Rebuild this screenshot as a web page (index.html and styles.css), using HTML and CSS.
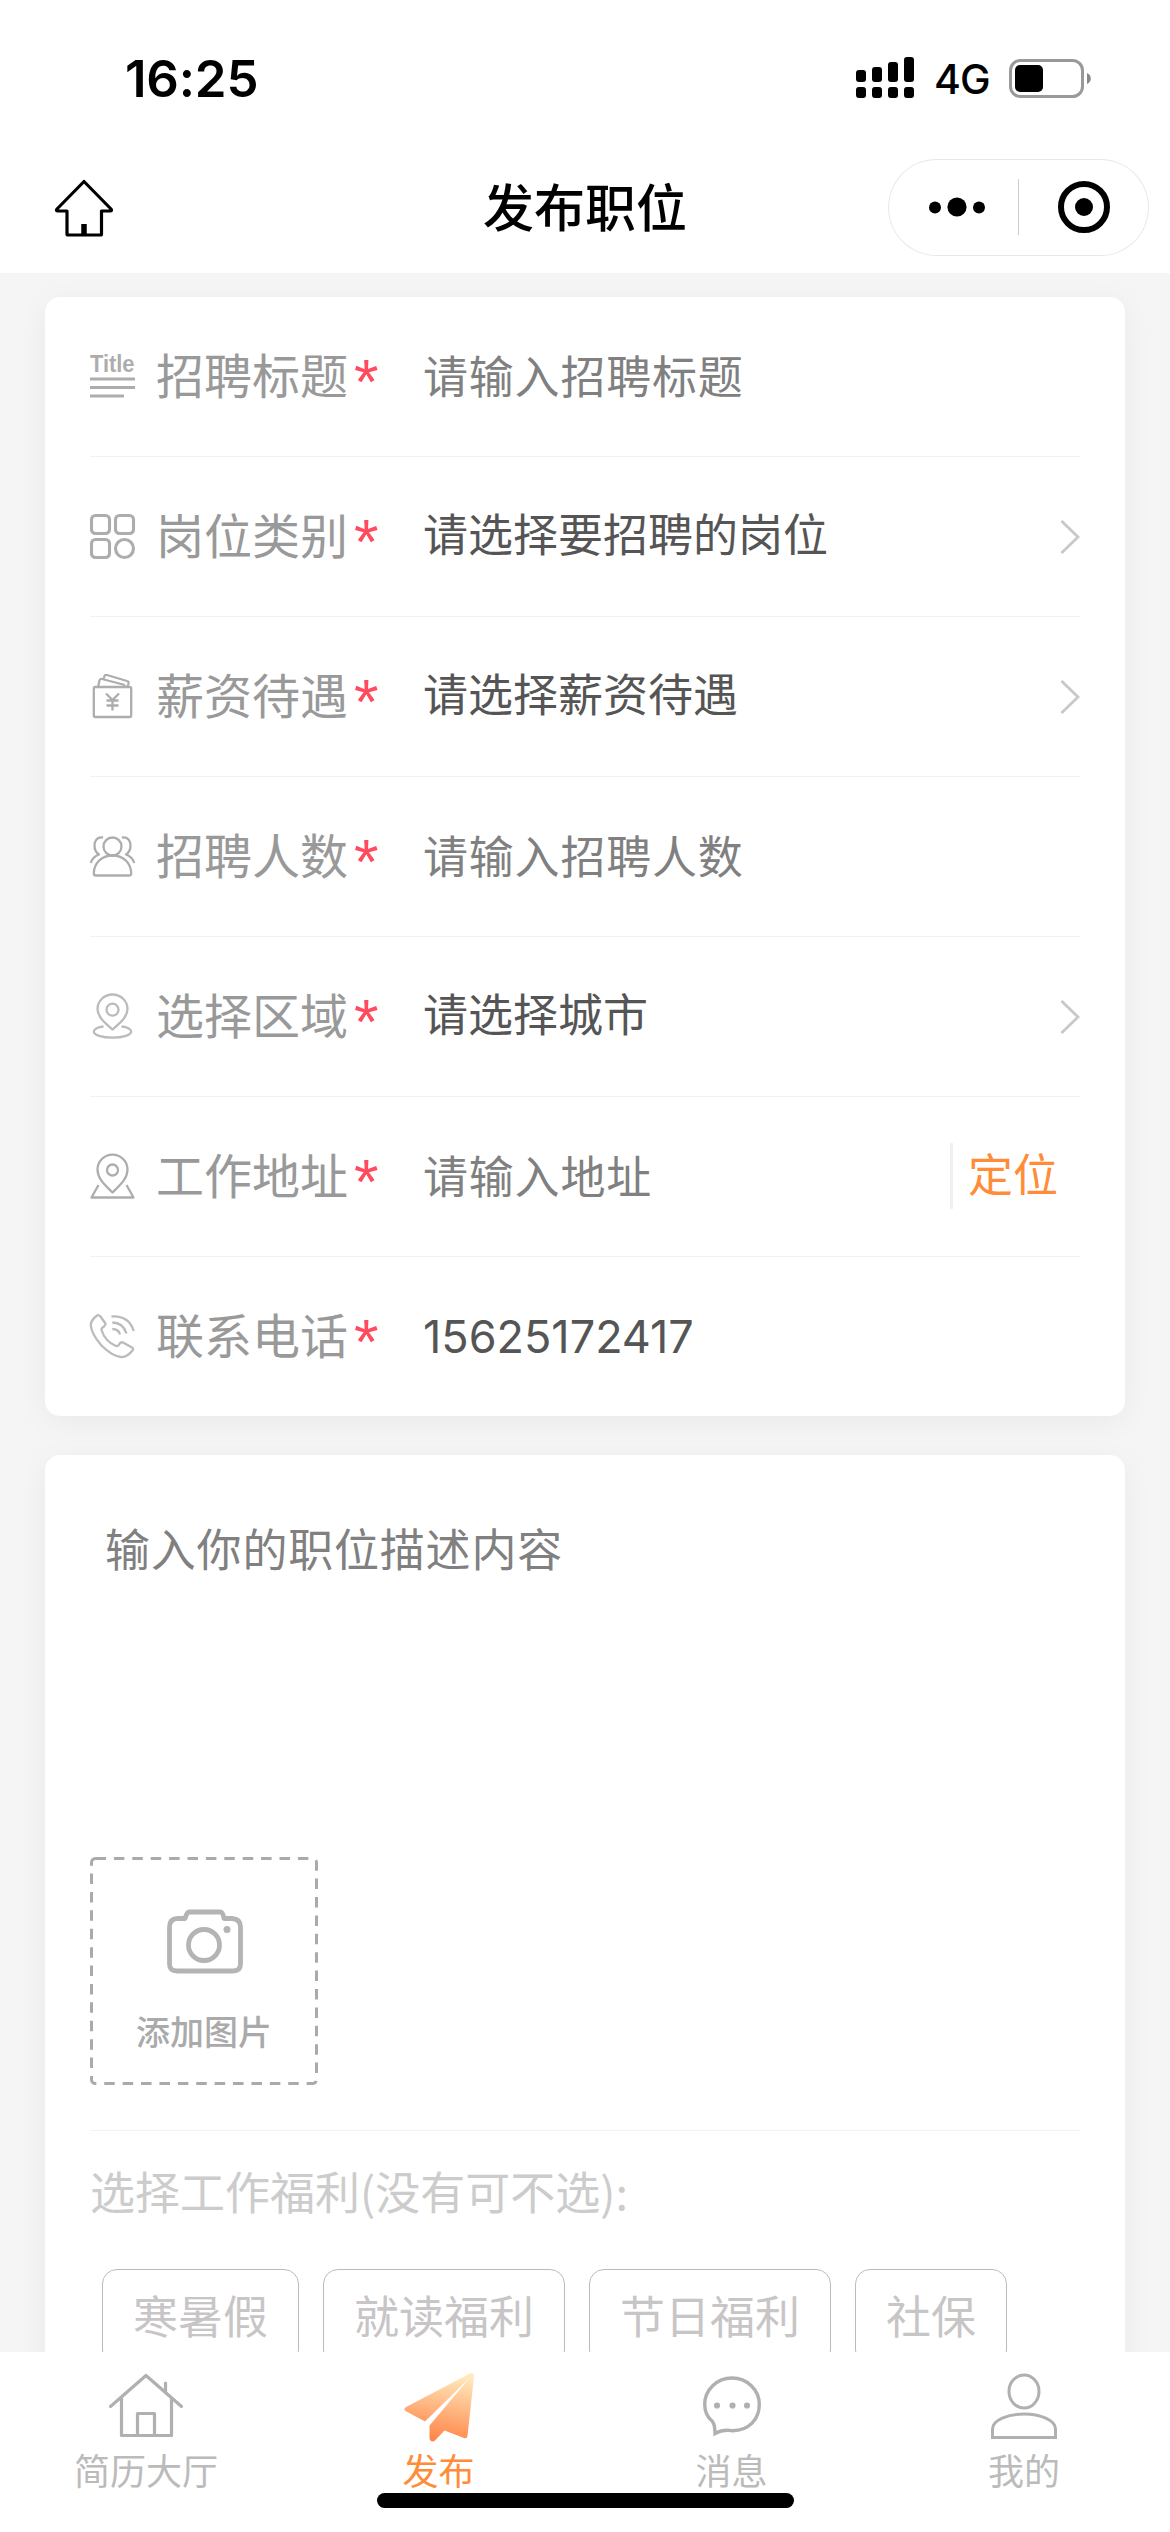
FILE: index.html
```html
<!DOCTYPE html>
<html lang="zh-CN">
<head>
<meta charset="utf-8">
<title>发布职位</title>
<link rel="stylesheet" href="styles.css">
</head>
<body>
<div class="app">
  <header class="top">
    <div class="status">
      <span class="time">16:25</span>
      <div class="status-right">
        <svg class="signal" width="58" height="42" viewBox="0 0 58 42"><g fill="#000"><rect x="0" y="13" width="10" height="12" rx="3"/><rect x="16" y="10" width="10" height="15" rx="3"/><rect x="32" y="5" width="10" height="20" rx="3"/><rect x="48" y="0" width="10" height="25" rx="3"/><rect x="0" y="30" width="10" height="11" rx="3"/><rect x="16" y="30" width="10" height="11" rx="3"/><rect x="32" y="30" width="10" height="11" rx="3"/><rect x="48" y="30" width="10" height="11" rx="3"/></g></svg>
        <span class="network">4G</span>
        <svg class="battery" width="82" height="39" viewBox="0 0 82 39"><rect x="1.5" y="1.5" width="72" height="36" rx="10" fill="none" stroke="#999" stroke-width="3"/><rect x="6" y="6" width="28" height="27" rx="5"/><path d="M78 14c5 2 5 9 0 11z" fill="#888"/></svg>
      </div>
    </div>
    <div class="nav">
      <svg class="nav-home" width="60" height="58" viewBox="0 0 60 58" fill="none" stroke="#000" stroke-width="3.2" stroke-linejoin="round"><path d="M30 2.5 57 30q1.500 2-1 2H47.500V55q0 1-1 1H14q-1 0-1-1V32H4q-2.500 0-1-2z"/><path d="M30 45V56" stroke-width="5.500"/></svg>
      <h1 class="nav-title">发布职位</h1>
      <div class="capsule">
        <svg width="261" height="97" viewBox="0 0 261 97"><circle cx="47" cy="48.500" r="6"/><circle cx="69" cy="48" r="9.600"/><circle cx="91" cy="48.500" r="6"/><path d="M130.500 20V76" stroke="#ccc"/><circle cx="196" cy="48" r="23" fill="none" stroke="#000" stroke-width="6"/><circle cx="196" cy="48" r="9"/></svg>
      </div>
    </div>
  </header>

  <main class="page">
    <section class="card fields">
      <div class="row">
        <svg class="icon" viewBox="0 0 45 45"><text class="icon-text" x="0" y="17.500" textLength="44.500" lengthAdjust="spacingAndGlyphs">Title</text><path d="M0 25H45M0 33.500H45M0 42H34" stroke-width="2.800"/></svg>
        <span class="label">招聘标题</span><span class="star">*</span><span class="placeholder">请输入招聘标题</span>
      </div>
      <div class="row">
        <svg class="icon bold" viewBox="0 0 45 45"><rect x="1.500" y="1.500" width="18" height="18" rx="4"/><rect x="25.500" y="1.500" width="18" height="18" rx="4"/><rect x="1.500" y="25.500" width="18" height="18" rx="4"/><circle cx="34.500" cy="34.500" r="9"/></svg>
        <span class="label">岗位类别</span><span class="star">*</span><span class="value">请选择要招聘的岗位</span>
        <svg class="chevron" viewBox="0 0 20 34"><path d="M1.500 1 18 17 1.500 33"/></svg>
      </div>
      <div class="row">
        <svg class="icon" viewBox="0 0 45 45"><rect x="3.800" y="13" width="37.400" height="30" rx="1.500"/><path d="M8 13 9.500 6.500Q10 4.500 12 5L33 10.500Q35 11 34.500 13M13.500 5 14.500 2Q15 .500 17 1L37 7Q39 7.500 38.500 9.500L37.500 13M16 19.500 22.500 26 29 19.500M22.500 26V36.500M16.500 26.500H28.500M16.500 31.500H28.500"/></svg>
        <span class="label">薪资待遇</span><span class="star">*</span><span class="value">请选择薪资待遇</span>
        <svg class="chevron" viewBox="0 0 20 34"><path d="M1.500 1 18 17 1.500 33"/></svg>
      </div>
      <div class="row">
        <svg class="icon" viewBox="0 0 45 45"><circle cx="22.500" cy="12.500" r="9"/><path d="M22.500 21.500C11 21.500 4 29.500 3.800 39.500Q3.800 41.500 6 41.500H39Q41.200 41.500 41.200 39.500C41 29.500 34 21.500 22.500 21.500ZM13 3.500C7 2.500 4.500 7 4.500 11.500 4.500 15.500 6.500 19 9 20.500 4.500 22 2 25 .800 29M32 3.500C38 2.500 40.500 7 40.500 11.500 40.500 15.500 38.500 19 36 20.500 40.500 22 43 25 44.200 29"/></svg>
        <span class="label">招聘人数</span><span class="star">*</span><span class="placeholder">请输入招聘人数</span>
      </div>
      <div class="row">
        <svg class="icon pale" viewBox="0 0 45 45"><path d="M22.500 35.500C15 29 7.500 23 7.500 15A15 14.500 0 0 1 37.500 15C37.500 23 30 29 22.500 35.500Z"/><circle cx="22.500" cy="15.700" r="6"/><path d="M13.500 32.500C7 33 3.800 35.500 3.800 37.500 3.800 41 12 43.700 22.500 43.700S41.200 41 41.200 37.500C41.200 35.500 38 33 31.500 32.500"/></svg>
        <span class="label">选择区域</span><span class="star">*</span><span class="value">请选择城市</span>
        <svg class="chevron" viewBox="0 0 20 34"><path d="M1.500 1 18 17 1.500 33"/></svg>
      </div>
      <div class="row">
        <svg class="icon" viewBox="0 0 45 45"><path d="M22.500 38.500C15 31 7.500 25 7.500 15.500A15 14.800 0 0 1 37.500 15.500C37.500 25 30 31 22.500 38.500Z"/><circle cx="22.500" cy="16" r="5.500"/><path d="M8.500 31 1.500 43.500H43.500L36.500 31"/></svg>
        <span class="label">工作地址</span><span class="star">*</span><span class="placeholder">请输入地址</span>
        <span class="locate">定位</span>
      </div>
      <div class="row">
        <svg class="icon pale" viewBox="0 0 45 45"><path d="M7 1.500Q8.700.500 10.500 2.500L15.500 9.500Q16 11 14 12.500 11 14.500 11.500 16 15 27 25 31.500 28 33 29 30.500 30.500 27.500 33 28.500L42 33.500Q44 35 42.500 36.500 37 43.500 31 43 22 42 11.500 31.500 1.500 20 .800 11.500.500 6.500 7 1.500ZM21.500 2.500Q39 1.500 43.700 17M22.300 8.500Q33 8.500 36.500 19.500M22.300 15Q28.500 15 30 20.500"/></svg>
        <span class="label">联系电话</span><span class="star">*</span><span class="value phone">15625172417</span>
      </div>
    </section>

    <section class="card detail">
      <div class="description">输入你的职位描述内容</div>
      <div class="upload">
        <svg class="upload-frame" width="228" height="228"><rect x="1.500" y="1.500" width="225" height="225" rx="4" fill="none" stroke="#aaa" stroke-width="3" stroke-dasharray="10.500 7.900"/></svg>
        <svg class="camera" width="76" height="65" viewBox="0 0 76 65" fill="none" stroke="#b4b4b4" stroke-width="4.800" stroke-linejoin="round"><path d="M10 9.500H18Q20 3 22 3H53Q56 3 57 9.500H65Q73.500 10 73.500 18V55Q73.500 62 66 62H10Q2.500 62 2.500 55V18Q2.500 10 10 9.500Z"/><circle cx="37" cy="36" r="15.500"/><circle cx="60" cy="20.500" r="3.500" fill="#b4b4b4" stroke="none"/></svg>
        <span class="upload-text">添加图片</span>
      </div>
      <div class="benefits">
        <div class="benefits-title">选择工作福利(没有可不选):</div>
        <div class="tags"><span class="tag">寒暑假</span><span class="tag">就读福利</span><span class="tag">节日福利</span><span class="tag">社保</span></div>
      </div>
    </section>
  </main>

  <nav class="tabbar">
    <div class="tab">
      <svg width="76" height="72" viewBox="0 0 76 72" fill="none" stroke="#b0b0b0" stroke-width="3.200" stroke-linecap="round" stroke-linejoin="round"><path d="M2.500 36.500 38 5.500 73.500 36.500M13.500 28V65.500H63.500V28M29.500 65V43.500H46.500V65M57.500 13V22"/></svg>
      <span>简历大厅</span>
    </div>
    <div class="tab active">
      <svg width="76" height="72" viewBox="0 0 76 72"><defs><linearGradient id="plane" x1="0.600" y1="0" x2="0.400" y2="1"><stop offset="0" stop-color="#ffe9bd"/><stop offset="1" stop-color="#ff8245"/></linearGradient></defs><path fill="url(#plane)" d="M69 3.500Q73 2.500 73 6.500L66.500 66Q66 69 63 68L43.500 60.500 34 70.500Q32 72 30 71 28.500 70 28.500 68V55.500L68.500 8 24 51.500 4.500 41Q2 39 5 37Z"/></svg>
      <span>发布</span>
    </div>
    <div class="tab">
      <svg width="76" height="72" viewBox="0 0 76 72" fill="none" stroke="#b0b0b0" stroke-width="3.400"><path d="M21 63.500Q21 55 18.500 51.500C13 47 10.700 42 10.700 34.500A27.300 26.500 0 0 1 65.300 34.500C65.300 49 55 61 38 60.700Q29 59 21 63.500Z"/><g fill="#b0b0b0" stroke="none"><circle cx="23" cy="35.500" r="3.100"/><circle cx="38.500" cy="35.500" r="3.100"/><circle cx="53" cy="35.500" r="3.100"/></g></svg>
      <span>消息</span>
    </div>
    <div class="tab">
      <svg width="76" height="72" viewBox="0 0 76 72" fill="none" stroke="#b0b0b0" stroke-width="3"><ellipse cx="38" cy="21.500" rx="15" ry="16.500"/><path d="M6.500 67.500V59C6.500 50 22 44 38 44S69.500 50 69.500 59V67.500Z"/></svg>
      <span>我的</span>
    </div>
    <div class="home-indicator"></div>
  </nav>
</div>
</body>
</html>
```
FILE: styles.css
```css
* { box-sizing: border-box; }

body {
  margin: 0;
  background: #f5f5f5;
  font-family: "Noto Sans CJK SC", sans-serif;
  color: #555;
}

svg { display: block; flex: none; }

.app {
  width: 1170px;
  height: 2532px;
  display: flex;
  flex-direction: column;
  overflow: hidden;
}

/* Status bar and navigation */
.top { height: 273px; flex: none; background: #fff; color: #000; }

.status {
  height: 156px;
  padding: 0 79px 0 125px;
  display: flex;
  align-items: center;
  justify-content: space-between;
  font-family: Inter, sans-serif;
}
.time { font-size: 51px; font-weight: 600; letter-spacing: -0.2px; }
.status-right { display: flex; align-items: center; }
.network { margin: 2px 19px 0 20px; font-size: 41px; font-weight: 500; width: 56px; letter-spacing: -0.8px; white-space: nowrap; }

.nav {
  height: 103px;
  padding: 0 21px 0 54px;
  display: grid;
  grid-template-columns: 261px 1fr 261px;
  align-items: center;
}
.nav-title { margin: 0 0 6px; padding-right: 33px; text-align: center; font-size: 51px; line-height: 60px; font-weight: 500; }
.capsule { width: 261px; height: 97px; border-radius: 49px; box-shadow: inset 0 0 0 1px #e8e8e8; }

/* Scrolling page */
.page { flex: 1; min-height: 0; overflow: hidden; padding: 24px 45px 0; }
.card {
  background: #fff;
  border-radius: 15px;
  box-shadow: 0 6px 30px rgba(0, 0, 0, 0.05);
  padding: 0 45px;
}
.row {
  height: 160px;
  display: flex;
  align-items: center;
  border-bottom: 1px solid #f2f2f2;
}
.row:last-child { border-bottom: 0; height: 159px; }

.icon { width: 45px; height: 45px; overflow: visible; fill: none; stroke: #adadad; stroke-width: 2.3; stroke-linejoin: round; stroke-linecap: butt; }
.icon.pale { stroke: #bbb; }
.icon.bold { stroke-width: 3.1; }
.icon-text { font: bold 24px "Liberation Sans", sans-serif; fill: #adadad; stroke: none; }
.label { margin: 0 0 8px 21px; width: 192px; font-size: 48px; line-height: 70px; color: #999; white-space: nowrap; }
.star { width: 75px; margin-top: 8px; padding-left: 6px; font-family: "Liberation Sans", sans-serif; font-size: 63px; line-height: 70px; color: #ff4a60; }
.value, .placeholder { font-size: 45px; line-height: 66px; white-space: nowrap; }
.value { margin-bottom: 7px; }
.placeholder { color: #808080; letter-spacing: 0.8px; margin-bottom: 3px; }
.phone { font-family: Inter, sans-serif; margin-bottom: 0; }
.chevron { width: 20px; height: 34px; margin-left: auto; fill: none; stroke: #c8c8c8; stroke-width: 2.8; }
.locate {
  height: 66px;
  margin: 0 22px 1px auto;
  padding-left: 15px;
  border-left: 3px solid #f0f0f0;
  font-size: 45px;
  line-height: 60px;
  color: #ff8c38;
}

.detail { margin-top: 39px; padding-top: 60px; height: 1100px; }
.description { height: 342px; padding-left: 15px; font-size: 45px; line-height: 66px; letter-spacing: 0.8px; color: #808080; }
.upload {
  position: relative;
  width: 228px;
  height: 228px;
  padding-top: 52px;
  display: flex;
  flex-direction: column;
  align-items: center;
}
.upload-frame { position: absolute; inset: 0; }
.camera { margin-left: 2px; }
.upload-text { margin-top: 32px; font-size: 34px; line-height: 50px; font-weight: 500; color: #aaa; }
.benefits { margin-top: 45px; border-top: 1px solid #f2f2f2; padding-top: 27px; }
.benefits-title { font-size: 45px; line-height: 66px; color: #ccc; }
.tags { display: flex; gap: 24px; margin: 45px 0 0 12px; }
.tag { height: 96px; padding: 0 30px; border: 1px solid #bbb; border-radius: 15px; font-size: 45px; line-height: 90px; color: #c8c5c6; white-space: nowrap; }

/* Bottom tabs */
.tabbar {
  position: relative;
  height: 180px;
  flex: none;
  display: grid;
  grid-template-columns: 292px 293px 293px 292px;
  padding-top: 18px;
  background: #fff;
}
.tab { display: flex; flex-direction: column; align-items: center; font-size: 36px; line-height: 50px; color: #bbb; }
.tab span { margin-top: 2px; }
.tab.active { color: #ff8c38; }
.home-indicator { position: absolute; left: 377px; top: 141px; width: 417px; height: 15px; border-radius: 8px; background: #000; }
```
